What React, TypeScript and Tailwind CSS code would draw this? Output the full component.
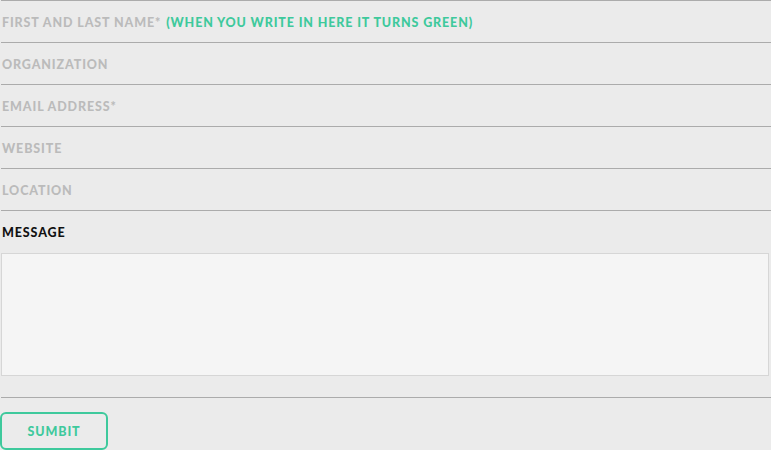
import React from "react";

const rows = ["ORGANIZATION", "EMAIL ADDRESS*", "WEBSITE", "LOCATION"];

export default function App() {
  return (
    <div className="w-[771px] h-[450px] bg-[#ebebeb] overflow-hidden" style={{ fontFamily: "Lato, 'Open Sans', sans-serif" }}>
      <div className="ml-px border-t border-[#ababab] h-[42px] flex items-center pl-px pt-[3px]">
        <span className="text-[12.5px] font-black tracking-[0.07em] text-[#bbbbbb]">FIRST AND LAST NAME*</span>
        <span className="ml-[5px] text-[12.5px] font-black tracking-[0.07em] text-[#3ec99c]">(WHEN YOU WRITE IN HERE IT TURNS GREEN)</span>
      </div>
      {rows.map((r) => (
        <div key={r} className="ml-px border-t border-[#ababab] h-[42px] flex items-center pl-px pt-[3px]">
          <span className="text-[12.5px] font-black tracking-[0.07em] text-[#bbbbbb]">{r}</span>
        </div>
      ))}
      <div className="ml-px border-t border-[#ababab] h-[43px] flex items-center pl-px pt-[2px]">
        <span className="text-[12.5px] font-black tracking-[0.07em] text-[#111111]">MESSAGE</span>
      </div>
      <div className="ml-px mr-[2px] h-[123px] bg-[#f5f5f5] border border-[#d6d6d6]" />
      <div className="ml-px mt-[21px] border-t border-[#ababab] h-[15px]" />
      <button className="w-[108px] h-[38px] border-2 border-[#3ec99c] rounded-[6px] pt-[2px] text-[12.5px] font-black tracking-[0.07em] text-[#3ec99c] flex items-center justify-center">
        SUMBIT
      </button>
    </div>
  );
}
